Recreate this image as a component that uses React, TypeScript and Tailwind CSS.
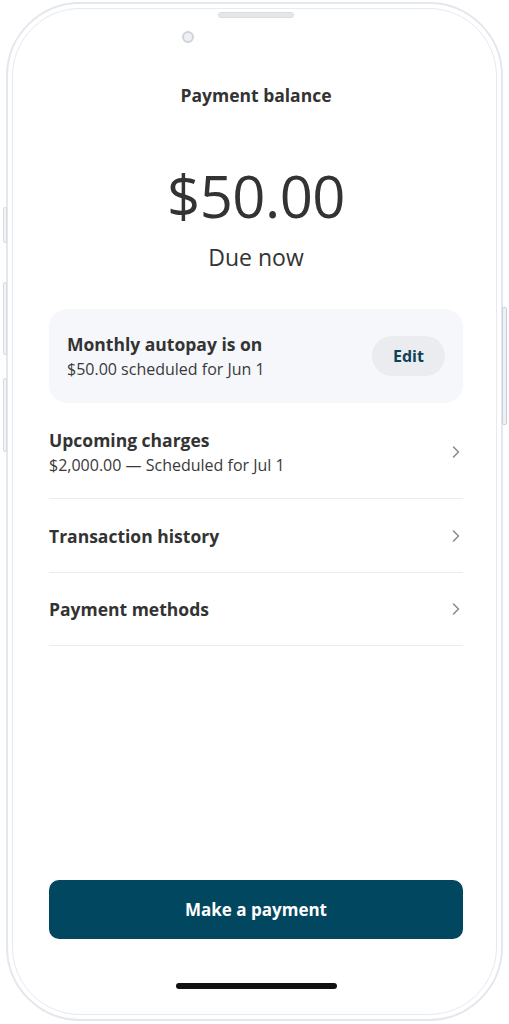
import React from "react";

const Chevron = () => (
  <svg width="10" height="16" viewBox="0 0 10 16" fill="none" className="shrink-0">
    <path d="M2.5 3 L7.5 8 L2.5 13" stroke="#8a8d93" strokeWidth="1.6" strokeLinecap="round" strokeLinejoin="round" />
  </svg>
);

function Row({ title, sub, h }: { title: string; sub?: string; h: string }) {
  return (
    <div className={`flex items-center justify-between border-b border-[#e8ecf0] ${h}`}>
      <div className="flex flex-col">
        <div className="text-[17.5px] font-bold leading-[22px] text-[#333]">{title}</div>
        {sub && <div className="text-[16px] leading-[20px] text-[#3a3a3a] mt-[4px]">{sub}</div>}
      </div>
      <div className="mr-[2px]">
        <Chevron />
      </div>
    </div>
  );
}

export default function App() {
  return (
    <div
      className="relative w-[509px] h-[1024px] bg-white overflow-hidden"
      style={{ fontFamily: "'Open Sans', 'Noto Sans', sans-serif" }}
    >
      {/* side buttons */}
      <div className="absolute left-[3px] top-[207px] w-[4px] h-[36px] rounded-[2px] border border-[#d6dae2] bg-[#f4f5f8]" />
      <div className="absolute left-[3px] top-[282px] w-[4px] h-[73px] rounded-[2px] border border-[#d6dae2] bg-[#f4f5f8]" />
      <div className="absolute left-[3px] top-[378px] w-[4px] h-[74px] rounded-[2px] border border-[#d6dae2] bg-[#f4f5f8]" />
      <div className="absolute left-[502px] top-[307px] w-[5px] h-[118px] rounded-[2px] border border-[#c9d0da] bg-[#eef1f5]" />

      <div className="ml-[6px] mt-[2px] w-[497px] h-[1019px] rounded-[74px] border-2 border-[#e3e7ee] p-[4px] bg-white">
        <div className="relative h-full rounded-[68px] border border-[#e6e9ef] flex flex-col pl-[36px] pr-[33px]">
          {/* speaker + camera */}
          <div className="absolute left-[205px] top-[3px] w-[76px] h-[6px] rounded-full bg-[#e4e6ea] border border-[#d9dce2]" />
          <div className="absolute left-[169px] top-[22px] w-[12px] h-[12px] rounded-full border-2 border-[#cfd3da] bg-[#eef0f3]" />

          <div className="mt-[75px] text-center text-[17.5px] font-bold leading-[22px] text-[#333]">
            Payment balance
          </div>
          <div className="mt-[59px] text-center text-[58px] leading-[62px] text-[#333] tracking-[-0.5px]">
            $50.00
          </div>
          <div className="mt-[16px] text-center text-[23px] leading-[28px] text-[#333]">Due now</div>

          <div className="mt-[38px] h-[94px] rounded-[18px] bg-[#f6f7fa] flex items-center justify-between pl-[18px] pr-[18px]">
            <div className="flex flex-col">
              <div className="text-[17.5px] font-bold leading-[22px] text-[#333]">Monthly autopay is on</div>
              <div className="text-[16px] leading-[20px] text-[#3a3a3a] mt-[4px]">$50.00 scheduled for Jun 1</div>
            </div>
            <div className="w-[73px] h-[40px] rounded-full bg-[#eaecf0] flex items-center justify-center text-[16px] font-bold text-[#0d4257]">
              Edit
            </div>
          </div>

          <div className="flex flex-col">
            <Row h="h-[96px] pt-[2px]" title="Upcoming charges" sub="$2,000.00 — Scheduled for Jul 1" />
            <Row h="h-[74px]" title="Transaction history" />
            <Row h="h-[73px]" title="Payment methods" />
          </div>

          <div className="flex-1" />

          <div className="h-[59px] rounded-[10px] bg-[#01475f] flex items-center justify-center text-[17px] font-bold text-white">
            Make a payment
          </div>
          <div className="mt-[44px] mb-[25px] mx-auto w-[161px] h-[6px] rounded-full bg-[#111]" />
        </div>
      </div>
    </div>
  );
}
